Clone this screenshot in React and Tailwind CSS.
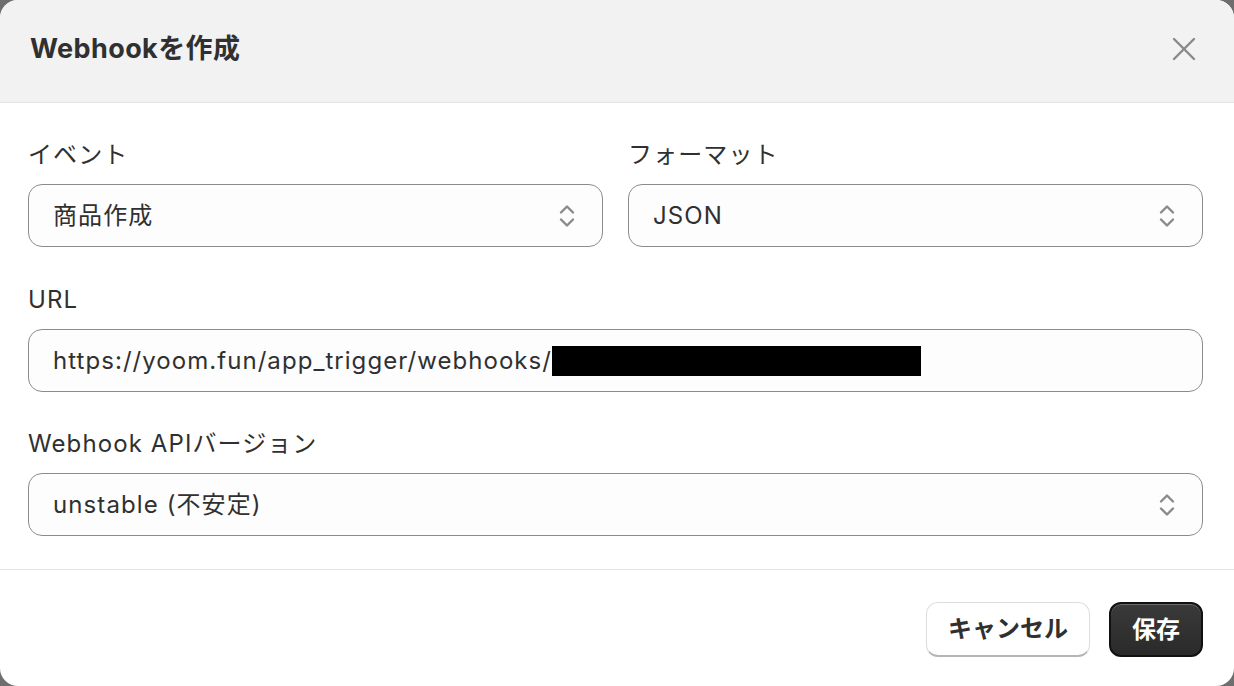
import React from "react";

const font = { fontFamily: '"Inter", "Noto Sans CJK JP", sans-serif' };

function Chevrons() {
  return (
    <svg width="18" height="28" viewBox="0 0 18 28" fill="none" stroke="#8a8a8a" strokeWidth="2.4" strokeLinecap="round" strokeLinejoin="round">
      <path d="M3 10.5 L9 4.5 L15 10.5" />
      <path d="M3 17.5 L9 23.5 L15 17.5" />
    </svg>
  );
}

function SelectBox({ value, className = "" }) {
  return (
    <div className={`flex h-[63px] items-center justify-between rounded-[14px] border border-[#8c8c8c] bg-[#fdfdfd] pl-[24px] pr-[26px] ${className}`}>
      <span className="text-[24px] tracking-[1.1px] text-[#303030]">{value}</span>
      <Chevrons />
    </div>
  );
}

function Label({ children }) {
  return <div className="mb-[13px] h-[32px] text-[24px] leading-[32px] tracking-[1.1px] text-[#303030]">{children}</div>;
}

export default function App() {
  return (
    <div className="h-[686px] w-[1234px] overflow-hidden bg-[#6e6e6e]" style={font}>
      <div className="flex h-full w-full flex-col overflow-hidden rounded-[18px] bg-white">
        <div className="flex h-[103px] shrink-0 items-center justify-between border-b border-[#e3e3e3] bg-[#f2f2f2] pl-[30px] pr-[38px] pb-[4px]">
          <h1 className="text-[27px] font-bold tracking-[0.4px] text-[#303030]">Webhookを作成</h1>
          <svg width="24" height="24" viewBox="0 0 24 24" fill="none" stroke="#8a8a8a" strokeWidth="2.4" strokeLinecap="round">
            <path d="M2 2 L22 22" />
            <path d="M22 2 L2 22" />
          </svg>
        </div>
        <div className="flex flex-col border-b border-[#e3e3e3] pl-[28px] pr-[31px] pt-[36px] pb-[33px]">
          <div className="mb-[37px] grid grid-cols-2 gap-[25px]">
            <div>
              <Label>イベント</Label>
              <SelectBox value="商品作成" />
            </div>
            <div>
              <Label>フォーマット</Label>
              <SelectBox value="JSON" />
            </div>
          </div>
          <div className="mb-[36px]">
            <Label>URL</Label>
            <div className="flex h-[63px] items-center rounded-[14px] border border-[#8c8c8c] bg-[#fdfdfd] pl-[24px]">
              <span className="text-[24px] tracking-[1.05px] text-[#303030]">https://yoom.fun/app_trigger/webhooks/</span>
              <div className="h-[30px] w-[369px] bg-black" />
            </div>
          </div>
          <div>
            <Label>Webhook APIバージョン</Label>
            <SelectBox value="unstable (不安定)" />
          </div>
        </div>
        <div className="flex flex-1 items-start justify-end gap-[19px] pr-[31px] pt-[32px]">
          <button className="h-[55px] w-[164px] rounded-[12px] border border-[#dcdcdc] border-b-[#b5b5b5] border-b-2 bg-white text-[24px] font-bold text-[#303030]">
            キャンセル
          </button>
          <button className="h-[55px] w-[94px] rounded-[12px] border-2 border-[#111] bg-gradient-to-b from-[#3a3a3a] to-[#2a2a2a] text-[24px] font-bold text-white shadow-[inset_0_1px_0_rgba(255,255,255,0.25)]">
            保存
          </button>
        </div>
      </div>
    </div>
  );
}
